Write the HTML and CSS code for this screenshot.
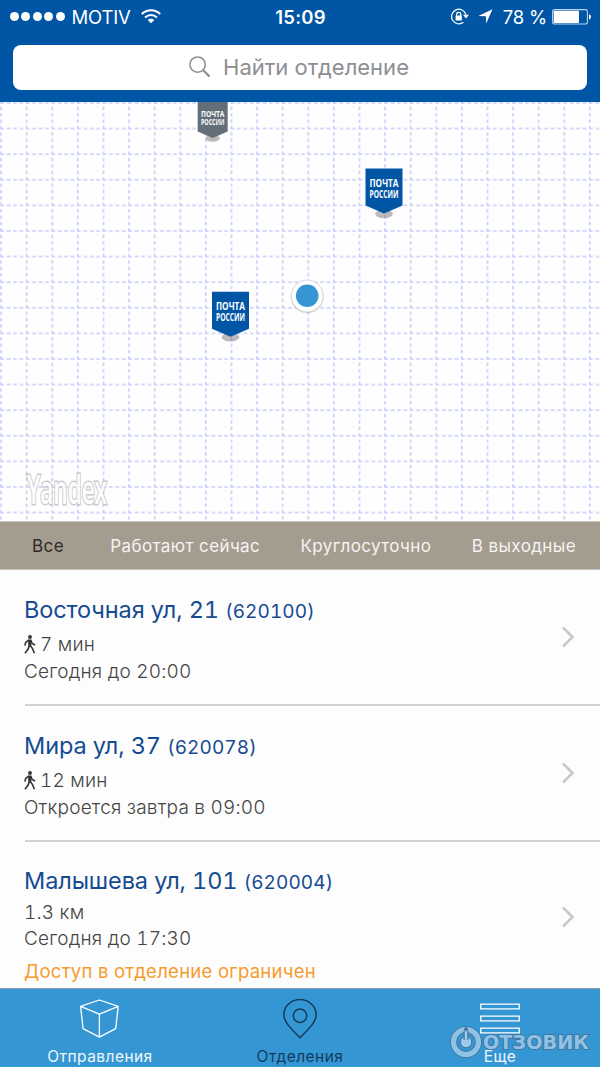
FILE: index.html
```html
<!DOCTYPE html>
<html lang="ru">
<head>
  <meta charset="UTF-8" />
  <meta name="viewport" content="width=device-width, initial-scale=1.0"/>
  <title>Почта России - Отделения</title>
  <link rel="stylesheet" href="styles.css">
</head>
<body>
  <header class="header">
    <div class="status-bar">
      <div class="status-left">
        <div class="signal"><i></i><i></i><i></i><i></i><i></i></div>
        <span class="carrier">MOTIV</span>
        <svg class="wifi" width="20" height="15" viewBox="0 0 20 15" fill="none" stroke="#fff" stroke-width="2.1">
          <path d="M.8 5.1C6-.1 14-.1 19.2 5.1"/>
          <path d="M4.1 8.5C7.5 5.2 12.5 5.2 15.9 8.5"/>
          <path d="M10 14.3L6.7 11C8.5 9.2 11.5 9.2 13.3 11z" fill="#fff" stroke="none"/>
        </svg>
      </div>
      <span class="clock">15:09</span>
      <div class="status-right">
        <svg class="lock" width="20" height="18" viewBox="0 0 20 18" fill="none" stroke="#fff">
          <path d="M15.9 6.5A7.3 7.3 0 1 0 13.4 14.3" stroke-width="1.2"/>
          <path d="M13 6.8h6l-3 3.6z" fill="#fff" stroke="none"/>
          <path d="M6.6 8V6.5a2.1 2.1 0 0 1 4.2 0V8" stroke-width="1.3"/>
          <rect x="5.6" y="7.6" width="6.2" height="4.8" rx=".5" fill="#fff" stroke="none"/>
        </svg>
        <svg class="arrow" width="15" height="15" viewBox="0 0 15 15" fill="#fff">
          <path d="M14.5.3L8.2 14.5 7.9 7.2.3 6.9z"/>
        </svg>
        <span class="percent">78 %</span>
        <svg class="battery" width="39" height="16" viewBox="0 0 39 16">
          <rect x=".6" y=".6" width="34.8" height="14.4" rx="2" fill="none" stroke="#b9d1ea" stroke-width="1.1"/>
          <rect x="1.7" y="1.7" width="25.3" height="12.2" rx=".8" fill="#fff"/>
          <path d="M37 5.2q2 .5 2 2.6t-2 2.6z" fill="#fff"/>
        </svg>
      </div>
    </div>
    <div class="search">
      <svg width="22" height="22" viewBox="0 0 22 22" fill="none" stroke="#8e8e93">
        <circle cx="8.6" cy="8.6" r="7.7" stroke-width="1.5"/>
        <path d="M14.2 14.2l6.3 6.3" stroke-width="2.2"/>
      </svg>
      <span>Найти отделение</span>
    </div>
  </header>

  <div class="map">
    <svg class="map-canvas" width="600" height="419" viewBox="0 0 600 419">
      <defs>
        <pattern id="grid" x=".2" y="0" width="25.6" height="25.6" patternUnits="userSpaceOnUse">
          <path d="M0 1h25.6" stroke="#c6ccfa" stroke-width="1.5" stroke-dasharray="3.8 2.6"/>
          <path d="M.8 0v25.6" stroke="#c6ccfa" stroke-width="1.6" stroke-dasharray="3.4 3" stroke-dashoffset="1.7"/>
        </pattern>
        <g id="pin">
          <ellipse cx="18.5" cy="45.5" rx="8.8" ry="4.2" fill="#777" fill-opacity=".5"/>
          <path d="M0 0h37v37L18.5 45 0 37z"/>
          <g class="pin-text">
            <text x="4" y="18.5" textLength="29" lengthAdjust="spacingAndGlyphs">ПОЧТА</text>
            <text x="4" y="29.2" textLength="29" lengthAdjust="spacingAndGlyphs">РОССИИ</text>
          </g>
        </g>
      </defs>
      <rect width="600" height="419" fill="url(#grid)"/>
      <use href="#pin" transform="translate(197.7 -.4) scale(.81)" fill="#646e78"/>
      <use href="#pin" x="365.5" y="66.5" fill="#0055a5"/>
      <use href="#pin" x="212" y="189.8" fill="#0055a5"/>
      <circle cx="307.2" cy="194.8" r="16.6" fill="#000" fill-opacity=".12"/>
      <circle cx="307.2" cy="193.9" r="16" fill="#fff" stroke="#aaa" stroke-opacity=".5" stroke-width=".8"/>
      <circle cx="307.2" cy="193.7" r="11.3" fill="#3596d4"/>
      <text class="yandex" x="27" y="402" textLength="80" lengthAdjust="spacingAndGlyphs">Yandex</text>
    </svg>
  </div>

  <nav class="filters">
    <a class="active">Все</a>
    <a>Работают сейчас</a>
    <a>Круглосуточно</a>
    <a>В выходные</a>
  </nav>

  <main class="offices">
    <div class="office">
      <div class="office-info">
        <h2>Восточная ул, 21 <small>(620100)</small></h2>
        <p class="distance">
          <svg class="walk" width="12" height="19" viewBox="0 0 12 19" fill="none" stroke="#333" stroke-width="1.6">
            <circle cx="6" cy="2" r="1.9" fill="#333" stroke="none"/>
            <path d="M5.8 4.5v6.2" stroke-width="3.2"/>
            <path d="M5 5L1.7 7.4.9 10.6M6.7 5.2l1.5 3.3 2.9 1.5M5.3 10.5L4 14.3 1 18.2M6.2 10.4l2.3 3.2 1.9 4.7"/>
          </svg>
          7 мин
        </p>
        <p class="hours">Сегодня до 20:00</p>
      </div>
      <svg class="chevron" width="14" height="22" viewBox="0 0 14 22"><path d="M2 1.5l9.5 9.5L2 20.5"/></svg>
    </div>
    <div class="office">
      <div class="office-info">
        <h2>Мира ул, 37 <small>(620078)</small></h2>
        <p class="distance">
          <svg class="walk" width="12" height="19" viewBox="0 0 12 19" fill="none" stroke="#333" stroke-width="1.6">
            <circle cx="6" cy="2" r="1.9" fill="#333" stroke="none"/>
            <path d="M5.8 4.5v6.2" stroke-width="3.2"/>
            <path d="M5 5L1.7 7.4.9 10.6M6.7 5.2l1.5 3.3 2.9 1.5M5.3 10.5L4 14.3 1 18.2M6.2 10.4l2.3 3.2 1.9 4.7"/>
          </svg>
          12 мин
        </p>
        <p class="hours">Откроется завтра в 09:00</p>
      </div>
      <svg class="chevron" width="14" height="22" viewBox="0 0 14 22"><path d="M2 1.5l9.5 9.5L2 20.5"/></svg>
    </div>
    <div class="office office-limited">
      <div class="office-info">
        <h2>Малышева ул, 101 <small>(620004)</small></h2>
        <p class="distance">1.3 км</p>
        <p class="hours">Сегодня до 17:30</p>
        <p class="warning">Доступ в отделение ограничен</p>
      </div>
      <svg class="chevron" width="14" height="22" viewBox="0 0 14 22"><path d="M2 1.5l9.5 9.5L2 20.5"/></svg>
    </div>
  </main>

  <footer class="tabs">
    <a class="tab">
      <svg width="40" height="40" viewBox="0 0 40 40" fill="none" stroke="#fff" stroke-width="1.3" stroke-linejoin="round">
        <path d="M.6 7.4L19.4 1l18.8 6.4-2.5 22.3-16.3 8.5L3.1 29.7zM.6 7.4l18.8 7.8 18.8-7.8M19.4 15.2v23"/>
      </svg>
      <span>Отправления</span>
    </a>
    <a class="tab active">
      <svg width="40" height="40" viewBox="0 0 40 40" fill="none" stroke="#123c5c" stroke-width="1.5" stroke-linejoin="round">
        <path d="M20 38.7C13 31.5 3.8 23.5 3.8 16a16.2 15.5 0 0 1 32.4 0C36.2 23.5 27 31.5 20 38.7z"/>
        <circle cx="20" cy="16.8" r="6.7"/>
      </svg>
      <span>Отделения</span>
    </a>
    <a class="tab">
      <svg width="40" height="40" viewBox="0 0 40 40" fill="none" stroke="#fff" stroke-width="1.3">
        <path d="M.7 5.2h38.6v4.6H.7zM.7 17.2h38.6v4.6H.7zM.7 29.2h38.6v4.6H.7z"/>
      </svg>
      <span>Еще</span>
    </a>
    <svg class="watermark" width="148" height="36" viewBox="0 0 148 36">
      <circle cx="17" cy="17" r="12.5" fill="none" stroke="#42779e" stroke-width="7"/>
      <circle cx="17" cy="17" r="12.5" fill="none" stroke="#8fc2e5" stroke-width="5.2"/>
      <circle cx="17" cy="17" r="5.7" fill="#9bcaeb" stroke="#42779e"/>
      <path d="M17 6v9" stroke="#42779e" stroke-width="5"/>
      <path d="M17 6v10" stroke="#9bcaeb" stroke-width="2.5"/>
      <circle cx="17" cy="4.2" r="2" fill="#42779e"/>
      <text x="34" y="24" textLength="106" lengthAdjust="spacingAndGlyphs">ОТЗОВИК</text>
    </svg>
  </footer>
</body>
</html>
```
FILE: styles.css
```css
* {
  box-sizing: border-box;
}

body {
  margin: 0;
  width: 600px;
  height: 1067px;
  overflow: hidden;
  display: flex;
  flex-direction: column;
  font-family: Inter, "Liberation Sans", sans-serif;
  background: #fdfdfd;
}

.header {
  height: 102px;
  flex: none;
  background: #0055a5;
  color: #fff;
}

.status-bar {
  height: 33px;
  display: grid;
  grid-template-columns: 1fr auto 1fr;
  align-items: center;
  padding: 0 9px 0 10px;
  font-size: 18.5px;
}

.status-left,
.status-right {
  display: flex;
  align-items: center;
}

.status-right {
  justify-content: flex-end;
}

.signal {
  display: flex;
  gap: 2.4px;
}

.signal i {
  width: 9px;
  height: 9px;
  border-radius: 50%;
  background: #fff;
}

.carrier {
  margin-left: 7px;
  letter-spacing: -0.2px;
}

.wifi {
  margin: 0 0 0 10px;
}

.clock {
  font-weight: 600;
  letter-spacing: 0.2px;
}

.lock {
  margin-right: -1px;
}

.arrow {
  margin: 0 10px 0 9px;
}

.percent {
  letter-spacing: -0.2px;
}

.battery {
  margin-left: 5px;
}

.search {
  height: 45px;
  margin: 12px 13px 0;
  padding: 0 2px 2px 0;
  border-radius: 8px;
  background: #fff;
  display: flex;
  align-items: center;
  justify-content: center;
  gap: 12px;
  color: #8e8e93;
  font-size: 22px;
}

.map {
  height: 419px;
  flex: none;
  background: #fefefe;
}

.map-canvas {
  display: block;
}

.pin-text {
  font: 700 11.3px "Open Sans", sans-serif;
  fill: #fff;
}

.yandex {
  font: 600 40px "Open Sans", sans-serif;
  fill: #fff;
  stroke: #c3c3c3;
  stroke-width: 3px;
  paint-order: stroke;
  opacity: 0.85;
}

.filters {
  height: 49px;
  flex: none;
  display: flex;
  justify-content: space-between;
  align-items: center;
  padding: 0 24px 0 32px;
  background: #a59c90;
  border-top: 1px solid #c9c4bc;
  border-bottom: 1px solid #c9c4bc;
  color: #f5f3f1;
  font-size: 17px;
  letter-spacing: 0.4px;
}

.filters .active {
  margin-right: 6px;
  color: #2d2b29;
}

.offices {
  height: 418px;
  flex: none;
  padding-left: 25px;
  font-feature-settings: "tnum";
}

.office {
  height: 136px;
  display: flex;
  align-items: center;
  justify-content: space-between;
  padding-right: 25px;
  border-bottom: 2px solid #d3d0ce;
}

.office-info {
  margin-left: -1px;
  padding-top: 4px;
}

.office-limited {
  height: 150px;
  border-bottom: 0;
}

.office-limited .office-info {
  padding-top: 13px;
}

h2,
p {
  margin: 0;
}

h2 {
  font-size: 23.5px;
  font-weight: 400;
  line-height: 34px;
  letter-spacing: -0.1px;
  color: #164b92;
  white-space: nowrap;
}

h2 small {
  font-size: 19px;
  letter-spacing: 0.1px;
}

.distance,
.hours {
  font-size: 19px;
  font-weight: 300;
  line-height: 27px;
  letter-spacing: 0.2px;
  color: #444;
}

.distance {
  margin-top: 2px;
  display: flex;
  align-items: center;
  gap: 4px;
}

.office-limited .distance {
  margin-top: 0;
  line-height: 26px;
}

.office-limited .hours {
  line-height: 26px;
}

.warning {
  margin-top: 6px;
  font-size: 18.5px;
  line-height: 26px;
  letter-spacing: 0.28px;
  color: #f59b2b;
}

.chevron {
  fill: none;
  stroke: #c7c7cc;
  stroke-width: 2.5;
}

.tabs {
  position: relative;
  height: 79px;
  flex: none;
  display: grid;
  grid-template-columns: repeat(3, 1fr);
  background: #3596d4;
  border-top: 1px solid #8f9ba5;
}

.tab {
  display: flex;
  flex-direction: column;
  align-items: center;
  padding-top: 10px;
  color: #eef6fb;
  font-size: 15.5px;
  line-height: 20px;
  letter-spacing: 0.45px;
}

.tab span {
  margin-top: 8px;
}

.tab.active {
  color: #123c5c;
}

.watermark {
  position: absolute;
  left: 449px;
  top: 36px;
}

.watermark text {
  font: 700 19.5px "DejaVu Sans", sans-serif;
  fill: #8fc2e5;
  stroke: #42779e;
  stroke-width: 2px;
  paint-order: stroke;
}
```
